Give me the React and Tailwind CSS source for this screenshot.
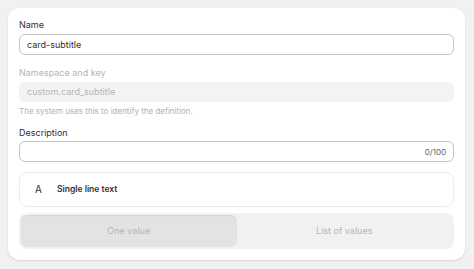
export default function App() {
  return (
    <div className="w-[474px] h-[269px] bg-[#f1f1f1] pt-[8px] pl-[8px]" style={{ fontFamily: "Inter, 'Liberation Sans', sans-serif" }}>
      <div className="w-[457px] h-[252px] bg-white rounded-[12px] shadow-[0_1px_2px_rgba(0,0,0,0.12)] px-[11px] pt-[10px] flex flex-col">
        <div className="text-[9px] leading-[13px] text-[#303030]">Name</div>
        <div className="mt-[3px] h-[21px] rounded-[6px] border border-[#c4c4c4] flex items-center px-[7px] text-[9px] text-[#303030]">card-subtitle</div>
        <div className="mt-[11px] text-[9px] leading-[13px] text-[#b5b5b5]">Namespace and key</div>
        <div className="mt-[3px] h-[20px] rounded-[6px] bg-[#f3f3f3] flex items-center px-[8px] text-[9px] text-[#b5b5b5]">custom.card_subtitle</div>
        <div className="mt-[3px] text-[8px] leading-[12px] text-[#b0b0b0]">The system uses this to identify the definition.</div>
        <div className="mt-[9px] text-[9px] leading-[13px] text-[#303030]">Description</div>
        <div className="mt-[2px] h-[21px] rounded-[6px] border border-[#c4c4c4] flex items-center justify-end px-[7px] text-[8px] text-[#616161]">0/100</div>
        <div className="mt-[10px] h-[35px] rounded-[8px] border border-[#ececec] flex items-center pl-[15px]">
          <span className="text-[10px] text-[#303030] w-[22px]">A</span>
          <span className="text-[8.5px] font-semibold text-[#303030]">Single line text</span>
        </div>
        <div className="mt-[6px] h-[36px] rounded-[8px] bg-[#f1f1f1] p-[2px] flex">
          <div className="flex-1 rounded-[6px] bg-[#e3e3e3] shadow-[inset_0_1px_1px_rgba(0,0,0,0.06)] flex items-center justify-center text-[9px] text-[#b5b5b5]">One value</div>
          <div className="flex-1 flex items-center justify-center text-[9px] text-[#b5b5b5]">List of values</div>
        </div>
      </div>
    </div>
  );
}
